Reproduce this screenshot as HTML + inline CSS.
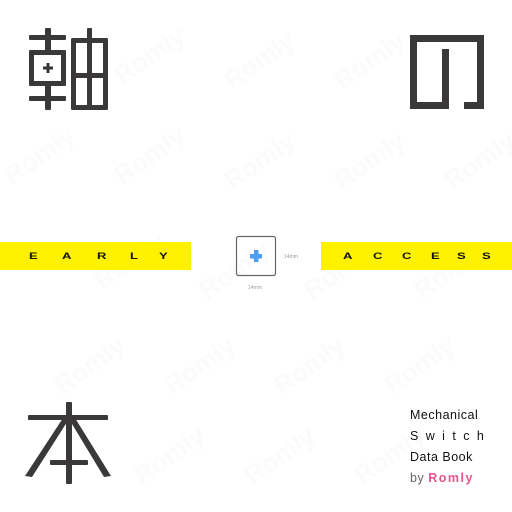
<!DOCTYPE html>
<html><head><meta charset="utf-8"><style>
html,body{margin:0;padding:0;width:512px;height:512px;background:#fff;overflow:hidden;position:relative;font-family:"Liberation Sans",sans-serif}
.wm{position:absolute;color:#000;opacity:0.012;font-weight:bold;font-size:26px;transform:rotate(-35deg)}
.bar{position:absolute;top:242px;height:28px;width:191px;background:#fff200}
.bar span{position:absolute;top:9px;font-size:9px;line-height:10px;font-weight:bold;color:#111;transform:scaleX(1.45);transform-origin:left}
.t{position:absolute;left:410px;font-size:12.5px;color:#111;letter-spacing:0.5px}
.hid{position:absolute;color:transparent;font-size:70px}
</style></head><body>
<div class="wm" style="left:110px;top:40px">Romly</div>
<div class="wm" style="left:220px;top:45px">Romly</div>
<div class="wm" style="left:330px;top:45px">Romly</div>
<div class="wm" style="left:0px;top:140px">Romly</div>
<div class="wm" style="left:110px;top:140px">Romly</div>
<div class="wm" style="left:220px;top:145px">Romly</div>
<div class="wm" style="left:330px;top:145px">Romly</div>
<div class="wm" style="left:440px;top:145px">Romly</div>
<div class="wm" style="left:90px;top:245px">Romly</div>
<div class="wm" style="left:195px;top:255px">Romly</div>
<div class="wm" style="left:300px;top:255px">Romly</div>
<div class="wm" style="left:410px;top:255px">Romly</div>
<div class="wm" style="left:50px;top:350px">Romly</div>
<div class="wm" style="left:160px;top:350px">Romly</div>
<div class="wm" style="left:270px;top:350px">Romly</div>
<div class="wm" style="left:380px;top:350px">Romly</div>
<div class="wm" style="left:130px;top:440px">Romly</div>
<div class="wm" style="left:240px;top:440px">Romly</div>
<div class="wm" style="left:350px;top:440px">Romly</div>

<div class="hid" style="left:28px;top:30px">軸</div>
<div class="hid" style="left:410px;top:30px">の</div>
<div class="hid" style="left:28px;top:400px">本</div>

<svg width="512" height="512" style="position:absolute;left:0;top:0" fill="#3a3838">
<rect x="45" y="28" width="6" height="82" rx="1"/>
<rect x="29" y="35" width="37" height="5" rx="1"/>
<rect x="29" y="96" width="37" height="5" rx="1"/>
<rect x="29" y="50" width="37" height="36" rx="1"/>
<rect x="34" y="55" width="27" height="26" fill="#fff"/>
<rect x="46.5" y="63" width="3" height="10"/>
<rect x="43" y="66.5" width="10" height="3"/>
<rect x="71" y="38" width="37" height="72" rx="1.5"/>
<rect x="76" y="43" width="27" height="62" fill="#fff"/>
<rect x="87" y="28" width="5" height="82" rx="1"/>
<rect x="71" y="73" width="37" height="5"/>
<path d="M410 35 H484 V109 H464 V102 H477 V42 H417 V102 H442 V49 H449 V109 H410 Z"/>
<rect x="28" y="415" width="80" height="5" rx="1"/>
<rect x="66" y="402" width="6" height="82" rx="1"/>
<rect x="50" y="460" width="38" height="5" rx="1"/>
<path d="M63 418 L69 419 L32 477 L25 476 Z"/>
<path d="M75 418 L69 419 L104 477 L111 476 Z"/>
<rect x="236.5" y="236.5" width="39" height="39" rx="2" fill="none" stroke="#666" stroke-width="1.2"/>
<rect x="254" y="250" width="4.5" height="12" fill="#4a9ff0" rx="0.5"/>
<rect x="250" y="254" width="12" height="4.5" fill="#4a9ff0" rx="0.5"/>
<text x="284" y="258" font-size="5" fill="#999" font-family="Liberation Sans">14mm</text>
<text x="248" y="289" font-size="5" fill="#999" font-family="Liberation Sans">14mm</text>
</svg>

<div class="bar" style="left:0">
<span style="left:29px">E</span><span style="left:62px">A</span><span style="left:97px">R</span><span style="left:130px">L</span><span style="left:159px">Y</span>
</div>
<div class="bar" style="left:321px">
<span style="left:22px">A</span><span style="left:52px">C</span><span style="left:81px">C</span><span style="left:110px">E</span><span style="left:136px">S</span><span style="left:161px">S</span>
</div>

<div class="t" style="top:408px">Mechanical</div>
<div class="t" style="top:429px;letter-spacing:7.4px">Switch</div>
<div class="t" style="top:450px">Data Book</div>
<div class="t" style="top:471px;color:#666">by <span style="color:#e0568f;font-weight:bold;letter-spacing:1.5px">Romly</span></div>
</body></html>
